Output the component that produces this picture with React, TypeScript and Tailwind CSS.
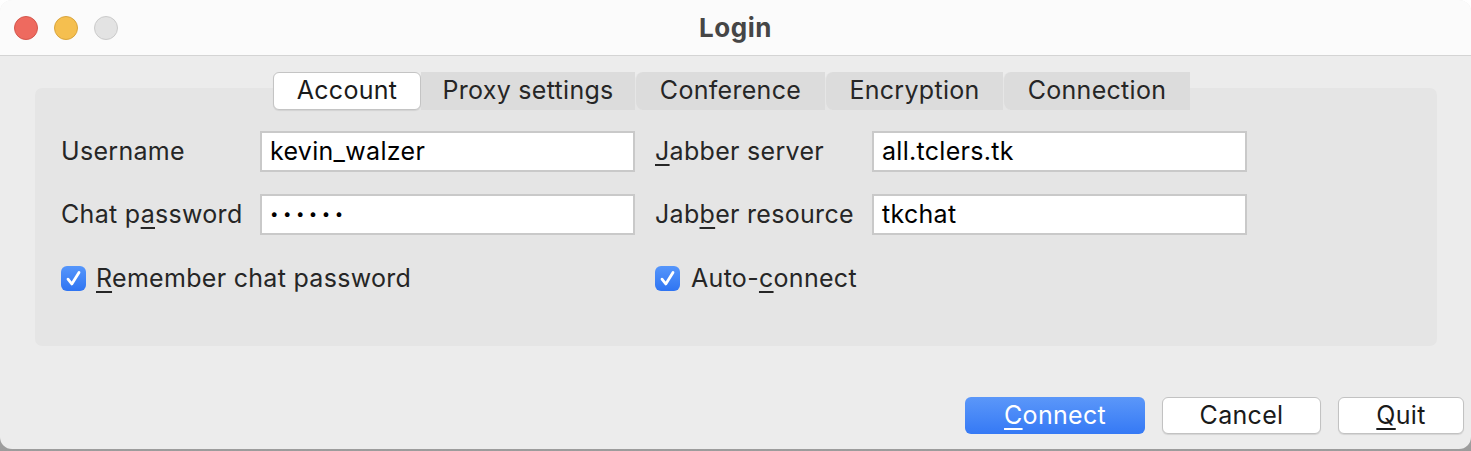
import React from 'react';

const font = { fontFamily: 'Inter, "Noto Sans", sans-serif' };

const Key: React.FC<{ children: React.ReactNode }> = ({ children }) => (
    <span className="underline decoration-[2px] underline-offset-[4px]">{children}</span>
);

const tabs = ['Account', 'Proxy settings', 'Conference', 'Encryption', 'Connection'];
const tabWidths = ['w-[148px]', 'w-[214px]', 'w-[190px]', 'w-[178px]', 'w-[187px]'];

const Check: React.FC = () => (
    <span className="w-[25px] h-[25px] rounded-[6px] bg-gradient-to-b from-[#5596fb] to-[#2f74f2] flex items-center justify-center shrink-0">
        <svg width="19" height="19" viewBox="0 0 19 19" fill="none">
            <path d="M4 10.2 L7.8 15 L15 3.5" stroke="white" strokeWidth="2.8" strokeLinecap="round" strokeLinejoin="round" />
        </svg>
    </span>
);

const Field: React.FC<{ value: string; dots?: boolean }> = ({ value, dots }) => (
    <div className="w-[375px] h-[41px] bg-white border-2 border-[#c9c9c9] flex items-center px-[8px] text-black text-[25px]">
        {dots ? <span className="tracking-[4.5px] text-[15px]">{value}</span> : value}
    </div>
);

const App: React.FC = () => {
    return (
        <div className="w-[1471px] h-[451px] bg-gradient-to-b from-white to-[#9c9c9c] tracking-[0.3px]" style={font}>
            <div className="w-full h-[449px] rounded-[12px] bg-[#ececec] overflow-hidden flex flex-col">
                {/* title bar */}
                <div className="h-[56px] shrink-0 bg-[#fbfbfb] border-b border-[#d4d4d4] grid grid-cols-[1fr_auto_1fr] items-center">
                    <div className="flex items-center gap-[16px] pl-[14px]">
                        <span className="w-[24px] h-[24px] rounded-full bg-[#ee6a5f] border border-[#d4574d]" />
                        <span className="w-[24px] h-[24px] rounded-full bg-[#f5bf4f] border border-[#d9a53d]" />
                        <span className="w-[24px] h-[24px] rounded-full bg-[#e3e3e3] border border-[#cbcbcb]" />
                    </div>
                    <div className="text-[26px] font-bold text-[#464646] tracking-[0.5px]">Login</div>
                    <div />
                </div>

                {/* tabs */}
                <div className="pt-[16px] flex justify-center pr-[8px] relative z-10">
                    <div className="flex h-[38px]">
                        {tabs.map((t, i) => (
                            <div
                                key={t}
                                className={
                                    i === 0
                                        ? `${tabWidths[i]} flex items-center justify-center bg-white border border-[#c4c4c4] rounded-[6px] text-[25px] text-[#1a1a1a] shadow-[0_1px_1px_rgba(0,0,0,0.08)]`
                                        : `${tabWidths[i]} flex items-center justify-center bg-[#dcdcdc] text-[25px] text-[#262626] ${i > 1 ? 'border-l border-[#e6e6e6] rounded-l-[8px]' : ''}`
                                }
                            >
                                {t}
                            </div>
                        ))}
                    </div>
                </div>

                {/* tab body */}
                <div className="mx-[35px] mr-[34px] -mt-[22px] h-[258px] bg-[#e5e5e5] rounded-[7px] pt-[43px] pl-[26px] text-[25px] text-[#262626]">
                    <div className="flex">
                        <div className="flex flex-col gap-[22px]">
                            <div className="flex items-center">
                                <span className="w-[199px]">Username</span>
                                <Field value="kevin_walzer" />
                            </div>
                            <div className="flex items-center">
                                <span className="w-[199px]">Chat p<Key>a</Key>ssword</span>
                                <Field value="••••••" dots />
                            </div>
                            <div className="flex items-center gap-[10px] mt-[3px]">
                                <Check />
                                <span><Key>R</Key>emember chat password</span>
                            </div>
                        </div>
                        <div className="flex flex-col gap-[22px] ml-[20px]">
                            <div className="flex items-center">
                                <span className="w-[217px]"><Key>J</Key>abber server</span>
                                <Field value="all.tclers.tk" />
                            </div>
                            <div className="flex items-center">
                                <span className="w-[217px]">Jab<Key>b</Key>er resource</span>
                                <Field value="tkchat" />
                            </div>
                            <div className="flex items-center gap-[11px] mt-[3px]">
                                <Check />
                                <span>Auto-<Key>c</Key>onnect</span>
                            </div>
                        </div>
                    </div>
                </div>

                {/* buttons */}
                <div className="flex justify-end gap-[17px] pr-[7px] mt-[51px]">
                    <button className="w-[180px] h-[37px] rounded-[6px] bg-gradient-to-b from-[#5b97f9] to-[#3579f5] text-white text-[25px] flex items-center justify-center">
                        <Key>C</Key>onnect
                    </button>
                    <button className="w-[159px] h-[37px] rounded-[6px] bg-white border border-[#c2c2c2] shadow-[0_1px_1px_rgba(0,0,0,0.1)] text-[#1a1a1a] text-[25px] flex items-center justify-center">
                        Cancel
                    </button>
                    <button className="w-[126px] h-[37px] rounded-[6px] bg-white border border-[#c2c2c2] shadow-[0_1px_1px_rgba(0,0,0,0.1)] text-[#1a1a1a] text-[25px] flex items-center justify-center">
                        <Key>Q</Key>uit
                    </button>
                </div>
            </div>
        </div>
    );
};

export default App;
